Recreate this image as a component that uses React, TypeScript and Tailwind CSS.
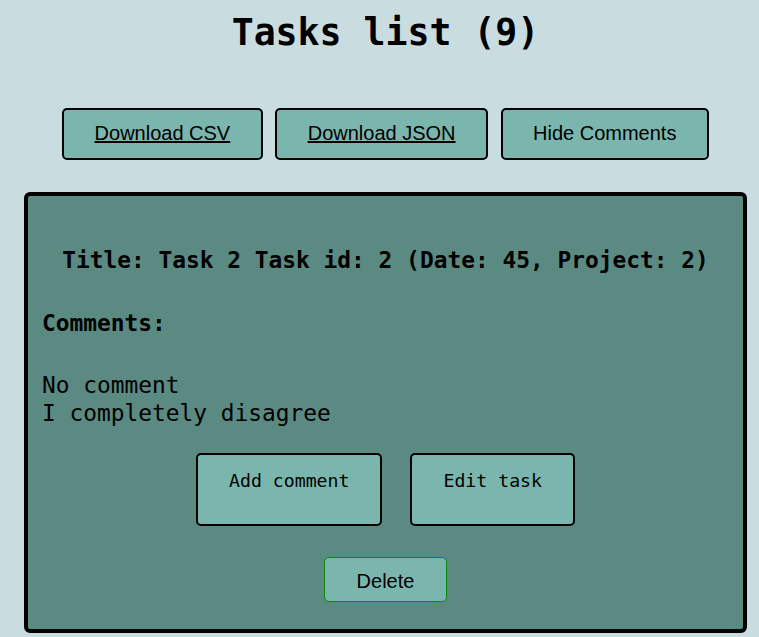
const mono = { fontFamily: '"DejaVu Sans Mono", "Liberation Mono", monospace' };

export default function App() {
  const comments = ['No comment', 'I completely disagree'];

  return (
    <div className="min-h-[637px] bg-[#c9dde0] pl-[24px] pr-[12px] pb-[5px]" style={mono}>
      {/* Header */}
      <h1 className="text-center text-[36.5px] font-bold leading-[44px] pt-[11px] text-black">Tasks list (9)</h1>

      {/* Toolbar */}
      <div className="flex justify-center gap-[12.5px] mt-[53px]" style={{ fontFamily: '"Liberation Sans", Arial, sans-serif' }}>
        <button className="h-[52px] px-[30.5px] pb-[2px] rounded-[5px] border-2 border-black bg-[#7bb6ae] text-[20px] text-black underline">
          Download CSV
        </button>
        <button className="h-[52px] px-[30.5px] pb-[2px] rounded-[5px] border-2 border-black bg-[#7bb6ae] text-[20px] text-black underline">
          Download JSON
        </button>
        <button className="h-[52px] px-[30.5px] pb-[2px] rounded-[5px] border-2 border-black bg-[#7bb6ae] text-[20px] text-black">
          Hide Comments
        </button>
      </div>

      {/* Task card */}
      <div className="mt-[32px] border-[4.5px] border-black rounded-[6px] bg-[#5a8a82] px-[14px] pt-[50px] pb-[27px] text-black">
        <div className="text-center text-[22.85px] font-bold leading-[28px]">
          Title: Task 2 Task id: 2 (Date: 45, Project: 2)
        </div>
        <div className="mt-[35px] text-[22.85px] font-bold leading-[28px]">Comments:</div>
        <div className="mt-[34px] text-[22.85px] leading-[28px]">
          {comments.map((c) => (
            <div key={c}>{c}</div>
          ))}
        </div>

        <div className="flex justify-center gap-[28px] mt-[26px]">
          <button className="h-[73px] px-[31px] pt-[14px] flex items-start rounded-[5px] border-2 border-black bg-[#7bb6ae] text-[18.2px] leading-[24px]">
            Add comment
          </button>
          <button className="h-[73px] px-[31px] pt-[14px] flex items-start rounded-[5px] border-2 border-black bg-[#7bb6ae] text-[18.2px] leading-[24px]">
            Edit task
          </button>
        </div>

        <div className="flex justify-center mt-[31px]">
          <button
            className="h-[45px] px-[32px] pt-[2px] rounded-[5px] border border-[#0a8a0a] bg-[#7bb6ae] text-[20px] text-black"
            style={{ fontFamily: '"Liberation Sans", Arial, sans-serif' }}
          >
            Delete
          </button>
        </div>
      </div>
    </div>
  );
}
